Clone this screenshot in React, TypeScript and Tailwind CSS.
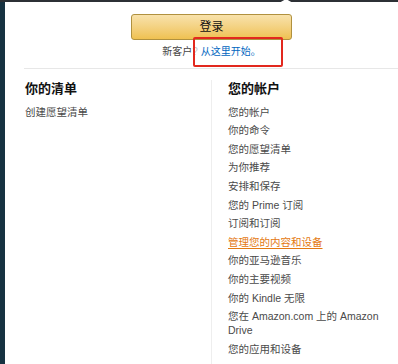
import React from 'react';

const accountLinks = [
  '您的帐户',
  '你的命令',
  '您的愿望清单',
  '为你推荐',
  '安排和保存',
  '您的 Prime 订阅',
  '订阅和订阅',
  '管理您的内容和设备',
  '你的亚马逊音乐',
  '你的主要视频',
  '你的 Kindle 无限',
  '您在 Amazon.com 上的 Amazon Drive',
  '您的应用和设备',
];

const App = () => {
  return (
    <div
      className="w-[398px] h-[364px] overflow-hidden bg-white flex flex-col text-[#444]"
      style={{ fontFamily: '"Liberation Sans", "Noto Sans CJK SC", sans-serif' }}
    >
      {/* top nav edge with popover notch */}
      <div className="relative h-[2px] bg-[#2c3035] shrink-0">
        <div className="absolute left-[279px] -top-[1px] w-0 h-0 border-l-[7px] border-r-[7px] border-b-[4px] border-l-transparent border-r-transparent border-b-white" />
      </div>

      <div className="flex flex-1">
        <div className="w-[5px] bg-[#163241] shrink-0" />

        <div className="relative flex-1 flex flex-col">
          {/* sign-in */}
          <div className="ml-[126px] mt-[12px] w-[161px] flex flex-col">
            <button className="h-[26px] w-full rounded-[3px] border border-[#b0913f] bg-gradient-to-b from-[#f8e2ab] to-[#efc150] text-[12px] leading-[24px] text-[#111]">
              登录
            </button>
            <div className="mt-[5px] text-center text-[10px] leading-[14px] text-[#444] whitespace-nowrap">
              新客户<span className="text-[#c8c8c8]">?</span> <span className="text-[#0066c0]">从这里开始。</span>
            </div>
          </div>

          {/* annotation box */}
          <div className="absolute left-[188px] top-[35px] w-[90px] h-[30px] border-2 border-[#e2281e] rounded-[2px]" />

          <div className="ml-[19px] mt-[9px] h-px bg-[#e7e7e7]" />

          {/* columns */}
          <div className="mt-[11px] flex flex-1">
            <div className="w-[206px] pl-[20px]">
              <div className="text-[13px] leading-[18px] font-bold text-[#111]">你的清单</div>
              <div className="mt-[6.7px] text-[10.5px] leading-[14px] text-[#4a4a4a]">创建愿望清单</div>
            </div>
            <div className="flex-1 border-l border-[#eeeeee] pl-[16px]">
              <div className="text-[13px] leading-[18px] font-bold text-[#111]">您的帐户</div>
              <ul className="mt-[6.7px] w-[160px] flex flex-col gap-[4.6px] text-[10.5px] leading-[14px]">
                {accountLinks.map((label) =>
                  label === '管理您的内容和设备' ? (
                    <li key={label} className="text-[#e47911] underline underline-offset-2">
                      {label}
                    </li>
                  ) : (
                    <li key={label} className="text-[#4a4a4a]">
                      {label}
                    </li>
                  )
                )}
              </ul>
            </div>
          </div>
        </div>
      </div>
    </div>
  );
};

export default App;
